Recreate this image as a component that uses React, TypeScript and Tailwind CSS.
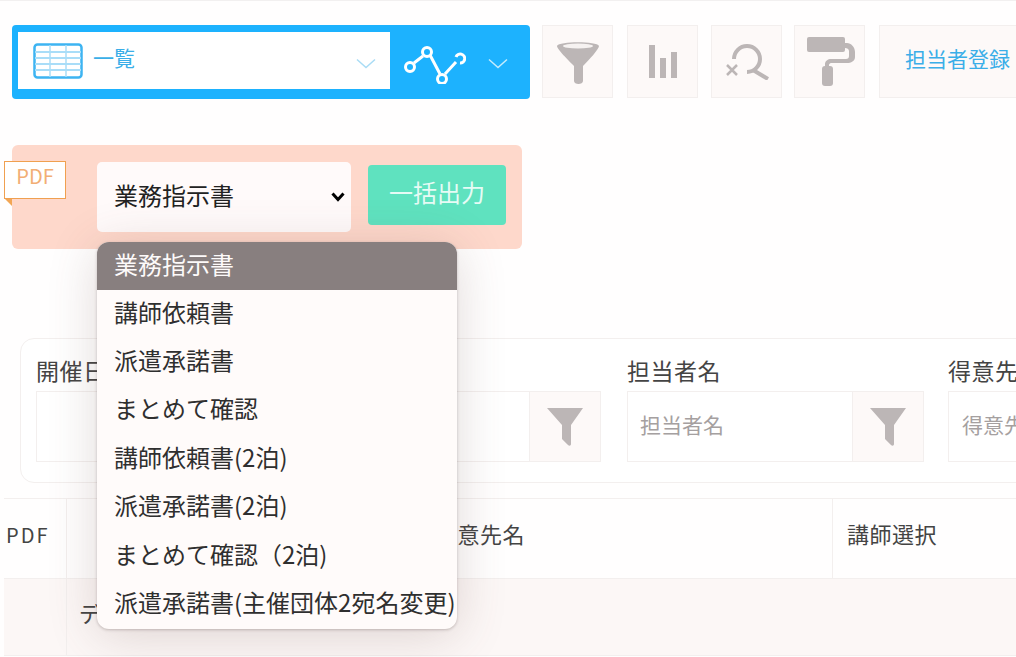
import React from 'react';

const OPTIONS = ['講師依頼書', '派遣承諾書', 'まとめて確認', '講師依頼書(2泊)', '派遣承諾書(2泊)', 'まとめて確認（2泊)', '派遣承諾書(主催団体2宛名変更)'];

const TableIcon = () => (
  <svg width="50" height="36" viewBox="0 0 50 36" fill="none">
    <rect x="1.5" y="1.5" width="47" height="33" rx="3" fill="#fff" stroke="#3db4f2" strokeWidth="2.5" />
    <path d="M2 9h46M2 15h46M2 21h46M2 27h46" stroke="#a9ddf8" strokeWidth="2" />
    <path d="M17 2v32M33 2v32" stroke="#a9ddf8" strokeWidth="1.5" />
  </svg>
);

const ChartIcon = () => (
  <svg width="62" height="46" viewBox="0 0 62 46" fill="none" stroke="#fff" strokeWidth="3">
    <path d="M10 25l9-7M26 17l10 19M41 36l11-12" />
    <circle cx="6" cy="29" r="4.5" />
    <circle cx="23" cy="14" r="4.5" />
    <circle cx="38" cy="41" r="4.5" />
    <path d="M52 19a4.5 4.5 0 1 1 4 6" />
  </svg>
);

const Chevron = ({ color }: { color: string }) => (
  <svg width="20" height="12" viewBox="0 0 20 12" fill="none" stroke={color} strokeWidth="1.5">
    <path d="M1 1.5l9 8 9-8" />
  </svg>
);

const FunnelCup = () => (
  <svg width="44" height="44" viewBox="0 0 44 44">
    <path d="M1 6C3 1 41 1 43 6c0 3-10 14-16 20v15c0 4-9 4-9 0V26C12 20 1 9 1 6z" fill="#bcb6b6" />
    <ellipse cx="22" cy="6" rx="15" ry="2.5" fill="#f6f2f1" />
  </svg>
);

const BarsIcon = () => (
  <svg width="28" height="33" viewBox="0 0 28 33" fill="#bcb6b6">
    <rect x="0" y="0" width="6" height="33" />
    <rect x="11" y="13" width="6" height="20" />
    <rect x="22" y="7" width="6" height="26" />
  </svg>
);

const SearchClearIcon = () => (
  <svg width="44" height="36" viewBox="0 0 44 36" fill="none" stroke="#bcb6b6" strokeWidth="4">
    <path d="M9 15a13 13 0 1 1 13 13" />
    <path d="M28 26l15 9" strokeWidth="4" />
    <path d="M2 21l10 10M12 21L2 31" strokeWidth="2.5" />
  </svg>
);

const RollerIcon = () => (
  <svg width="48" height="49" viewBox="0 0 48 49" fill="#bcb6b6">
    <rect x="0" y="0" width="38" height="15" rx="2" />
    <path d="M38 6h2c4 0 8 4 8 9v5c0 4-4 6-8 6H24c-1 0-2 1-2 2v2h-4v-3c0-3 3-5 6-5h15c2 0 3-1 3-3v-5c0-2-2-3-4-3h-2z" />
    <rect x="15" y="29" width="11" height="20" rx="3" />
  </svg>
);

const Funnel = () => (
  <svg width="38" height="40" viewBox="0 0 38 40" fill="#bcb6b6">
    <path d="M1 1h36L25 18v19c0 2-2 2-3 1l-6-6V18z" />
  </svg>
);

const ToolButton = ({ children, className = '' }: { children: React.ReactNode; className?: string }) => (
  <div className={`w-[71px] h-[73px] bg-[#fdf9f8] border border-[#f3efee] flex items-center justify-center shrink-0 ${className}`}>{children}</div>
);

export default function App() {
  return (
    <div className="relative w-[1016px] h-[657px] overflow-hidden bg-[#fffefe] text-[#333] font-['Noto_Sans_CJK_JP','Noto_Sans',sans-serif]">
      <div className="h-px bg-[#f2f0f0]" />

      {/* toolbar */}
      <div className="flex items-start mt-[24px] ml-[12px]">
        <div className="w-[518px] h-[74px] bg-[#1db2fe] rounded-[4px] flex items-start pl-[6px] pt-[7px] shrink-0">
          <div className="w-[372px] h-[57px] bg-white flex items-center pl-[15px] pr-[14px]">
            <TableIcon />
            <span className="ml-[10px] text-[21px] text-[#3aaee8] leading-none -mt-[6px]">一覧</span>
            <span className="ml-auto mt-[6px]"><Chevron color="#a9dcf5" /></span>
          </div>
          <div className="flex items-center h-[57px] pl-[14px]">
            <ChartIcon />
            <span className="ml-[22px] mt-[6px]"><Chevron color="#c5ecfd" /></span>
          </div>
        </div>
        <div className="flex ml-[12px]">
          <ToolButton><FunnelCup /></ToolButton>
          <ToolButton className="ml-[14px]"><BarsIcon /></ToolButton>
          <ToolButton className="ml-[13px]"><SearchClearIcon /></ToolButton>
          <ToolButton className="ml-[12px] pl-[3px]"><RollerIcon /></ToolButton>
          <div className="ml-[14px] w-[160px] h-[73px] bg-[#fdf9f8] border border-[#f3efee] flex items-center pl-[25px] pb-[5px] text-[21px] text-[#3aaee8] whitespace-nowrap shrink-0">担当者登録</div>
        </div>
      </div>

      {/* pdf panel */}
      <div className="relative w-[510px] h-[104px] mt-[46px] ml-[12px] bg-[#fed8cb] rounded-[6px] flex items-start pl-[85px] pt-[17px]">
        <div className="absolute left-[-8px] top-[16px] w-[62px] h-[38px] bg-white border border-[#f0a050] text-[#f2ae74] text-[20px] leading-[27px] text-center">PDF</div>
        <div className="absolute left-[-7px] top-[54px] w-0 h-0 border-t-[7px] border-l-[7px] border-t-[#f2a655] border-l-transparent" />
        <div className="w-[254px] h-[70px] bg-[#fffafa] rounded-[5px] flex items-center pl-[17px] pb-[5px] text-[24px] text-[#222]">
          業務指示書
          <svg className="ml-auto mr-[6px] mt-[5px]" width="14" height="10" viewBox="0 0 14 10" fill="none" stroke="#000" strokeWidth="3">
            <path d="M1.5 1.5L7 7.5l5.5-6" />
          </svg>
        </div>
        <div className="ml-[17px] mt-[3px] w-[138px] h-[60px] bg-[#5fe2bf] rounded-[4px] flex items-center justify-center pb-[7px] text-[24px] text-[#e6fbf5]">一括出力</div>
      </div>

      {/* filter card */}
      <div className="w-[1100px] h-[145px] mt-[89px] ml-[20px] bg-white border border-[#f3efee] rounded-[14px] flex pl-[15px] pt-[16px]">
        <div className="w-[565px] shrink-0">
          <div className="text-[23px] leading-[36px] tracking-[0.5px] text-[#444] -mt-[3px] mb-[3px]">開催日</div>
          <div className="flex h-[71px] border border-[#f3efee]">
            <div className="flex-1" />
            <div className="w-[71px] bg-[#fdf9f8] border-l border-[#f3efee] flex items-center justify-center"><Funnel /></div>
          </div>
        </div>
        <div className="w-[297px] ml-[26px] shrink-0">
          <div className="text-[23px] leading-[36px] tracking-[0.5px] text-[#444] -mt-[3px] mb-[3px]">担当者名</div>
          <div className="flex h-[71px] border border-[#f3efee]">
            <div className="flex-1 flex items-center pl-[12px] pb-[4px] text-[21px] text-[#a5a0a0]">担当者名</div>
            <div className="w-[71px] bg-[#fdf9f8] border-l border-[#f3efee] flex items-center justify-center"><Funnel /></div>
          </div>
        </div>
        <div className="w-[298px] ml-[24px] shrink-0">
          <div className="text-[23px] leading-[36px] tracking-[0.5px] text-[#444] -mt-[3px] mb-[3px]">得意先名</div>
          <div className="flex h-[71px] border border-[#f3efee]">
            <div className="flex-1 flex items-center pl-[13px] pb-[4px] text-[21px] text-[#a5a0a0]">得意先名</div>
          </div>
        </div>
      </div>

      {/* table */}
      <div className="ml-[4px] mt-[15px] border-t border-[#f3efee]">
        <div className="flex h-[80px] border-b border-[#f3efee] text-[22px] text-[#444]">
          <div className="w-[63px] border-r border-[#f3efee] flex items-center pl-[2px] pb-[7px] text-[20px] tracking-[2px]">PDF</div>
          <div className="w-[766px] border-r border-[#f3efee] flex items-center pl-[368px] pb-[10px] whitespace-nowrap tracking-[0.5px]">得意先名</div>
          <div className="flex-1 flex items-center pl-[14px] pb-[10px] tracking-[0.5px]">講師選択</div>
        </div>
        <div className="flex h-[77px] bg-[#fcf7f6] border-b border-[#f3efee] text-[22px] text-[#444]">
          <div className="w-[63px] border-r border-[#f3efee]" />
          <div className="flex-1 flex items-center pl-[12px] pb-[10px]">データ</div>
        </div>
      </div>

      {/* open select menu */}
      <div className="absolute left-[97px] top-[242px] w-[360px] h-[387px] bg-[#fffbfa] rounded-[12px] overflow-hidden shadow-[0_6px_50px_rgba(100,70,65,0.2),0_1px_3px_rgba(90,70,70,0.3)] text-[24px] text-[#2f2f2f]">
        <div className="h-[48px] bg-[#887f7f] text-[#fdfafa] flex items-center pl-[17px] pb-[5px]">業務指示書</div>
        {OPTIONS.map(o => (
          <div key={o} className="h-[48.4px] flex items-center pl-[17px] pb-[5px] whitespace-nowrap">{o}</div>
        ))}
      </div>
    </div>
  );
}
